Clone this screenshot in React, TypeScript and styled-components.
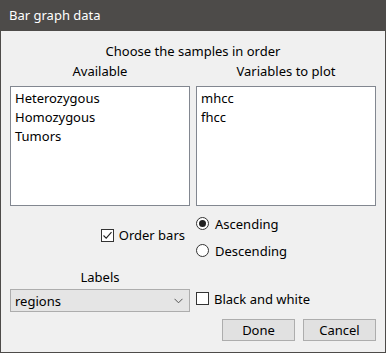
import React, { useState } from 'react';
import styled, { createGlobalStyle } from 'styled-components';

const GlobalStyle = createGlobalStyle`
    html, body {
        margin: 0;
        padding: 0;
        background: #f0f0f0;
    }
    * {
        box-sizing: border-box;
    }
`;

const available = ['Heterozygous', 'Homozygous', 'Tumors'];
const toPlot = ['mhcc', 'fhcc'];

const CheckMark = () => (
    <svg width="11" height="11" viewBox="0 0 11 11">
        <path d="M1.5 5.5 L4.2 8.2 L9.5 2.2" fill="none" stroke="#222" strokeWidth="1.1" />
    </svg>
);

const Chevron = () => (
    <svg width="9" height="6" viewBox="0 0 9 6">
        <path d="M0.5 0.8 L4.5 4.8 L8.5 0.8" fill="none" stroke="#555" strokeWidth="1" />
    </svg>
);

const App = () => {
    const [order, setOrder] = useState(true);
    const [bw, setBw] = useState(false);
    const [dir, setDir] = useState<'asc' | 'desc'>('asc');

    return (
        <Window>
            <GlobalStyle />
            <TitleBar>Bar graph data</TitleBar>
            <Body>
                <Heading>Choose the samples in order</Heading>
                <Columns>
                    <ColumnLabel>Available</ColumnLabel>
                    <ColumnLabel>Variables to plot</ColumnLabel>
                    <ListBox>
                        {available.map((item) => (
                            <ListItem key={item}>{item}</ListItem>
                        ))}
                    </ListBox>
                    <ListBox>
                        {toPlot.map((item) => (
                            <ListItem key={item}>{item}</ListItem>
                        ))}
                    </ListBox>
                    <OrderCell>
                        <CheckRow onClick={() => setOrder(!order)}>
                            <CheckBox>{order && <CheckMark />}</CheckBox>
                            Order bars
                        </CheckRow>
                    </OrderCell>
                    <RadioGroup>
                        <RadioRow onClick={() => setDir('asc')}>
                            <Radio $checked={dir === 'asc'} />
                            Ascending
                        </RadioRow>
                        <RadioRow onClick={() => setDir('desc')}>
                            <Radio $checked={dir === 'desc'} />
                            Descending
                        </RadioRow>
                    </RadioGroup>
                    <SmallLabel>Labels</SmallLabel>
                    <div />
                    <Combo>
                        regions
                        <Chevron />
                    </Combo>
                    <CheckRow onClick={() => setBw(!bw)}>
                        <CheckBox>{bw && <CheckMark />}</CheckBox>
                        Black and white
                    </CheckRow>
                </Columns>
                <ButtonRow>
                    <Button>Done</Button>
                    <Button>Cancel</Button>
                </ButtonRow>
            </Body>
        </Window>
    );
};

const Window = styled.div`
    width: 386px;
    height: 353px;
    border: 1px solid #4d4b49;
    border-top: none;
    background: #f0f0f0;
    font-family: 'Noto Sans', 'Open Sans', sans-serif;
    font-size: 13px;
    color: #000;
    display: flex;
    flex-direction: column;
`;
const TitleBar = styled.div`
    height: 31px;
    margin: 0 -1px;
    background: #4d4b49;
    color: #ffffff;
    display: flex;
    align-items: center;
    padding-left: 9px;
    padding-bottom: 1px;
    font-size: 13px;
`;
const Body = styled.div`
    padding: 0 9px 0 9px;
    display: flex;
    flex-direction: column;
`;
const Heading = styled.div`
    height: 16px;
    margin-top: 12px;
    line-height: 16px;
    text-align: center;
`;
const Columns = styled.div`
    display: grid;
    grid-template-columns: 180px 180px;
    grid-template-rows: 24px 120px 60px 19px 27px;
    column-gap: 6px;
    margin-top: 3px;
`;
const ColumnLabel = styled.div`
    text-align: center;
    line-height: 18px;
`;
const ListBox = styled.div`
    background: #ffffff;
    border: 1px solid #828790;
    padding: 2px 4px;
`;
const ListItem = styled.div`
    height: 19px;
    line-height: 19px;
`;
const OrderCell = styled.div`
    display: flex;
    justify-content: flex-end;
    align-items: center;
    padding-right: 5px;
    padding-bottom: 2px;
`;
const CheckRow = styled.div`
    display: flex;
    align-items: center;
    gap: 5px;
    cursor: default;
`;
const CheckBox = styled.span`
    width: 13px;
    height: 13px;
    border: 1px solid #333333;
    background: #ffffff;
    display: flex;
    align-items: center;
    justify-content: center;
`;
const RadioGroup = styled.div`
    display: flex;
    flex-direction: column;
    padding-top: 8px;
    gap: 8px;
`;
const RadioRow = styled.div`
    display: flex;
    align-items: center;
    gap: 6px;
    height: 19px;
    cursor: default;
`;
const Radio = styled.span<{ $checked: boolean }>`
    width: 13px;
    height: 13px;
    border-radius: 50%;
    border: 1px solid #333333;
    background: #ffffff;
    display: flex;
    align-items: center;
    justify-content: center;
    &::after {
        content: '';
        width: 7px;
        height: 7px;
        border-radius: 50%;
        background: #222222;
        display: ${(p) => (p.$checked ? 'block' : 'none')};
    }
`;
const SmallLabel = styled.div`
    text-align: center;
    line-height: 16px;
    padding-top: 3px;
`;
const Combo = styled.div`
    height: 23px;
    align-self: end;
    background: #e5e5e5;
    border: 1px solid #adadad;
    display: flex;
    align-items: center;
    justify-content: space-between;
    padding: 0 6px 0 4px;
`;
const ButtonRow = styled.div`
    display: flex;
    justify-content: flex-end;
    gap: 8px;
    margin-top: 7px;
`;
const Button = styled.button`
    width: 73px;
    height: 22px;
    background: #e1e1e1;
    border: 1px solid #adadad;
    font-family: inherit;
    font-size: 13px;
    color: #000;
    padding: 0;
`;

export default App;
